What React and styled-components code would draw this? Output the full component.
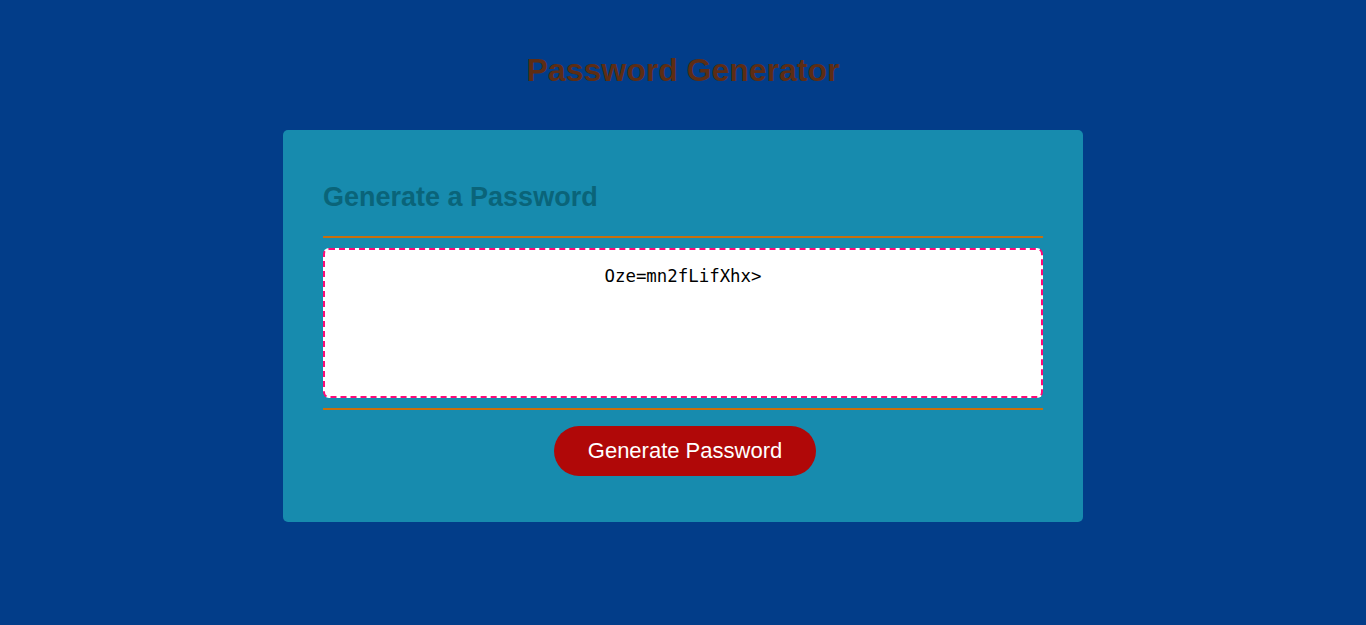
import React, { useState } from "react";
import styled, { createGlobalStyle } from "styled-components";

const GlobalStyle = createGlobalStyle`
  html, body {
    margin: 0;
    padding: 0;
    background-color: #023d89;
    font-family: "Liberation Sans", Arial, sans-serif;
  }
`;

const Page = styled.div`
  min-height: 625px;
  display: flex;
  flex-direction: column;
  align-items: center;
  padding-top: 53px;
  box-sizing: border-box;
`;

const Title = styled.h1`
  margin: 0 0 42px;
  font-size: 32px;
  line-height: 35px;
  font-weight: 700;
  color: #5d2d14;
  text-align: center;
`;

const Card = styled.section`
  width: 800px;
  box-sizing: border-box;
  background-color: #178bae;
  border-radius: 5px;
  padding: 52px 40px 46px;
  display: flex;
  flex-direction: column;
`;

const CardHeader = styled.h2`
  margin: 0 0 24px;
  font-size: 27px;
  line-height: 30px;
  font-weight: 700;
  color: #0a6479;
`;

const Rule = styled.div`
  height: 2px;
  background-color: #c96f0c;
`;

const Output = styled.textarea`
  display: block;
  margin: 10px 0;
  width: 100%;
  height: 150px;
  box-sizing: border-box;
  padding: 16px 14px;
  border: 2px dashed #ff0a78;
  border-radius: 6px;
  background: #fff;
  resize: none;
  overflow: hidden;
  text-align: center;
  font-family: "DejaVu Sans Mono", "Liberation Mono", monospace;
  font-size: 17.4px;
  line-height: 20px;
  color: #000;
  &:focus {
    outline: none;
  }
`;

const Footer = styled.div`
  display: flex;
  justify-content: center;
  padding-top: 16px;
  padding-left: 4px;
`;

const Button = styled.button`
  height: 50px;
  padding: 0 34px;
  border: none;
  border-radius: 25px;
  background-color: #b00808;
  color: #fff;
  font-family: "Liberation Sans", Arial, sans-serif;
  font-size: 22px;
  cursor: pointer;
  &:hover {
    background-color: #c41212;
  }
`;

const chars =
  "ABCDEFGHIJKLMNOPQRSTUVWXYZabcdefghijklmnopqrstuvwxyz0123456789!@#$%^&*()=<>?";

export default function App() {
  const [password, setPassword] = useState("Oze=mn2fLifXhx>");

  const generate = () => {
    let out = "";
    for (let i = 0; i < 15; i++) {
      out += chars[Math.floor(Math.random() * chars.length)];
    }
    setPassword(out);
  };

  return (
    <>
      <GlobalStyle />
      <Page>
        <Title>Password Generator</Title>
        <Card>
          <CardHeader>Generate a Password</CardHeader>
          <Rule />
          <Output
            readOnly
            value={password}
            aria-label="Generated Password"
          />
          <Rule />
          <Footer>
            <Button onClick={generate}>Generate Password</Button>
          </Footer>
        </Card>
      </Page>
    </>
  );
}
